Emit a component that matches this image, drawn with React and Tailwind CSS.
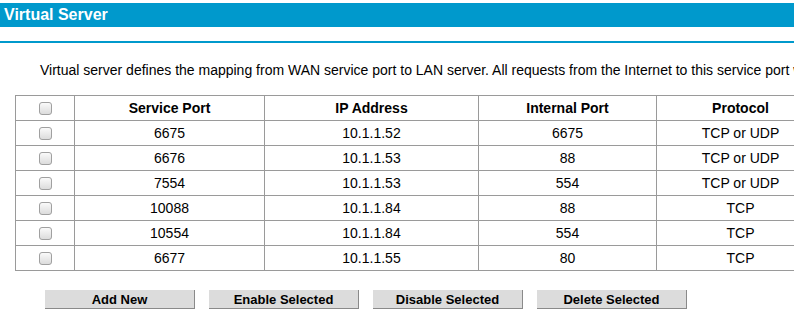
import React from "react";

const rows = [
  ["6675", "10.1.1.52", "6675", "TCP or UDP"],
  ["6676", "10.1.1.53", "88", "TCP or UDP"],
  ["7554", "10.1.1.53", "554", "TCP or UDP"],
  ["10088", "10.1.1.84", "88", "TCP"],
  ["10554", "10.1.1.84", "554", "TCP"],
  ["6677", "10.1.1.55", "80", "TCP"],
];

function Box() {
  return (
    <span className="inline-block w-[13px] h-[13px] rounded-[3px] border border-[#a0a0a0] bg-gradient-to-b from-[#fafafa] to-[#dcdcdc] align-middle" />
  );
}

function Btn({ children }) {
  return (
    <button className="w-[150px] h-[19px] bg-[#dcdcdc] border-r border-b border-[#8a8a8a] text-[13px] font-bold text-black leading-none">
      {children}
    </button>
  );
}

export default function App() {
  const cell = "border border-[#9a9a9a] text-center h-[25px] p-0";
  return (
    <div
      className="w-[794px] h-[334px] overflow-hidden bg-white text-black"
      style={{ fontFamily: '"Liberation Sans", Arial, sans-serif' }}
    >
      <div className="w-[860px] pt-[3px]">
        <div className="h-[24px] bg-[#0099cc] text-white font-bold text-[16px] leading-[24px] pl-[4px]">
          Virtual Server
        </div>
        <div className="mt-[14px] h-[2px] bg-[#0099cc]" />
        <p className="mt-[19px] pl-[40px] text-[14px] leading-[16px] whitespace-nowrap">
          Virtual server defines the mapping from WAN service port to LAN server. All requests from the Internet to this service port will be redirected to the specified server.
        </p>
        <table className="mt-[17px] ml-[15px] border-collapse table-fixed text-[14px]">
          <colgroup>
            <col className="w-[59px]" />
            <col className="w-[190px]" />
            <col className="w-[214px]" />
            <col className="w-[178px]" />
            <col className="w-[168px]" />
          </colgroup>
          <thead>
            <tr>
              <th className={cell}><Box /></th>
              <th className={cell}>Service Port</th>
              <th className={cell}>IP Address</th>
              <th className={cell}>Internal Port</th>
              <th className={cell}>Protocol</th>
            </tr>
          </thead>
          <tbody>
            {rows.map((r, i) => (
              <tr key={i}>
                <td className={cell}><Box /></td>
                {r.map((c, j) => (
                  <td key={j} className={cell}>{c}</td>
                ))}
              </tr>
            ))}
          </tbody>
        </table>
        <div className="mt-[19px] ml-[45px] flex gap-[14px]">
          <Btn>Add New</Btn>
          <Btn>Enable Selected</Btn>
          <Btn>Disable Selected</Btn>
          <Btn>Delete Selected</Btn>
        </div>
      </div>
    </div>
  );
}
